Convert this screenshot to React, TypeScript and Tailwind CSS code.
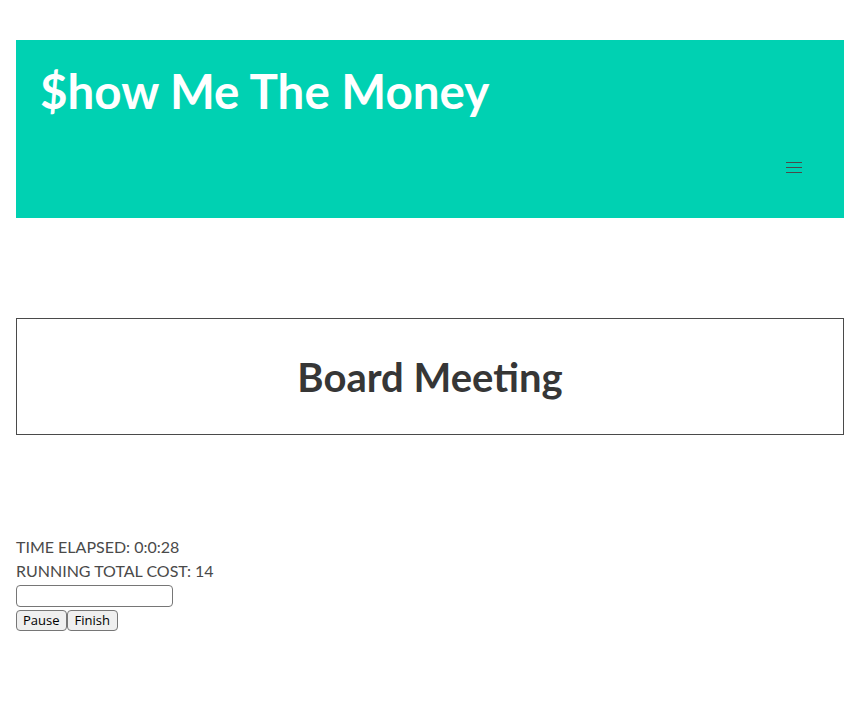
export default function App() {
  return (
    <div className="min-h-[704px] bg-white pl-4 pr-5 pt-10 font-['Lato',sans-serif] text-[#363636]">
      {/* Hero */}
      <div className="h-[178px] bg-[#00d1b2] px-6 pt-6 flex flex-col">
        <h1 className="text-[47.5px] font-bold leading-[1.125] text-white">
          $how Me The Money
        </h1>
        <div className="flex justify-end mt-[45px] pr-[18px]">
          <button className="w-4 flex flex-col gap-[4px]">
            <span className="block h-px w-4 bg-[#4a4a4a]" />
            <span className="block h-px w-4 bg-[#4a4a4a]" />
            <span className="block h-px w-4 bg-[#4a4a4a]" />
          </button>
        </div>
      </div>

      {/* Meeting */}
      <div className="mt-[100px] h-[117px] border border-[#4a4a4a] flex items-center justify-center">
        <h2 className="text-[40px] font-bold leading-none">Board Meeting</h2>
      </div>

      {/* Timer */}
      <div className="mt-[100px] text-base leading-6 text-[#4a4a4a]">
        <p>TIME ELAPSED: 0:0:28</p>
        <p>RUNNING TOTAL COST: 14</p>
        <input className="block mt-[2px] h-[22px] w-[157px] border border-[#767676] rounded-sm" />
        <div className="flex mt-[3px]">
          <button className="h-[21px] px-[6px] text-[13px] leading-none font-['Open_Sans',sans-serif] text-black bg-[#efefef] border border-[#767676] rounded-sm">
            Pause
          </button>
          <button className="h-[21px] px-[7px] text-[13px] leading-none font-['Open_Sans',sans-serif] text-black bg-[#efefef] border border-[#767676] rounded-sm">
            Finish
          </button>
        </div>
      </div>
    </div>
  );
}
